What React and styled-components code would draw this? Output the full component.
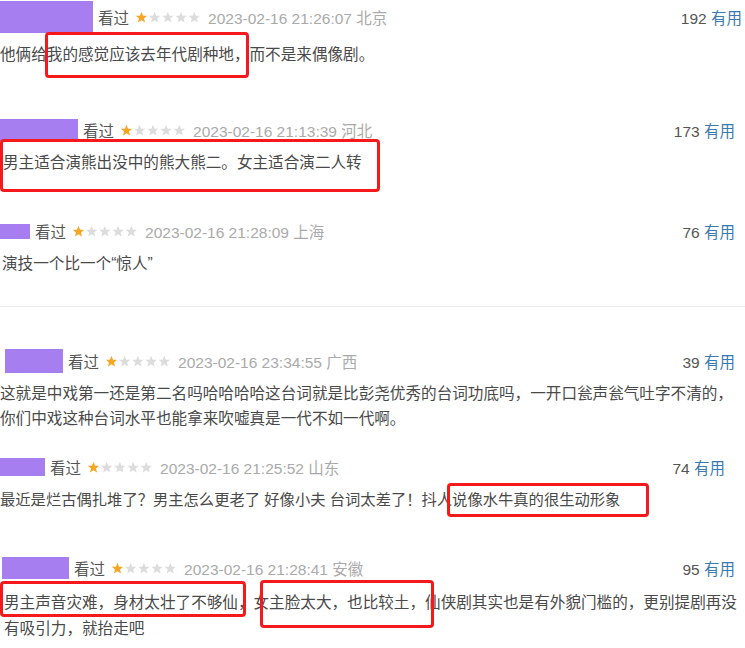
import React from 'react';
import styled, { createGlobalStyle } from 'styled-components';

const GlobalStyle = createGlobalStyle`
    body {
        margin: 0;
        background: #fff;
        font-family: "Liberation Sans", "Noto Sans CJK SC", sans-serif;
    }
`;

// top = space above the block, gap = space between header and text
const comments = [
    {
        id: 1, top: 3, gap: 10.5, padL: 0, padR: 3, textL: 0, lineH: 25,
        name: { w: 93, h: 32 },
        time: '2023-02-16 21:26:07', place: '北京', votes: 192,
        text: '他俩给我的感觉应该去年代剧种地，而不是来偶像剧。',
        marks: [{ left: 45, top: -9.5, width: 204, height: 46 }],
    },
    {
        id: 2, top: 49.5, gap: 5.5, padL: 0, padR: 10, textL: 3, lineH: 25,
        name: { w: 78, h: 22 },
        time: '2023-02-16 21:13:39', place: '河北', votes: 173,
        text: '男主适合演熊出没中的熊大熊二。女主适合演二人转',
        marks: [{ left: 0, top: -10.5, width: 380, height: 53 }],
    },
    {
        id: 3, top: 42.5, gap: 5.5, padL: 0, padR: 10, textL: 2, lineH: 25,
        name: { w: 30, h: 15 },
        time: '2023-02-16 21:28:09', place: '上海', votes: 76,
        text: '演技一个比一个“惊人”',
        marks: [],
        divider: true,
    },
    {
        id: 4, top: 40, gap: 5.5, padL: 5, padR: 10, textL: 0, lineH: 25,
        name: { w: 58, h: 24 },
        time: '2023-02-16 23:34:55', place: '广西', votes: 39,
        text: '这就是中戏第一还是第二名吗哈哈哈哈这台词就是比彭尧优秀的台词功底吗，一开口瓮声瓮气吐字不清的，你们中戏这种台词水平也能拿来吹嘘真是一代不如一代啊。',
        marks: [],
        textW: 738,
    },
    {
        id: 5, top: 22.5, gap: 5.5, padL: 0, padR: 20, textL: 0, lineH: 25, size: 15.3,
        name: { w: 45, h: 18 },
        time: '2023-02-16 21:25:52', place: '山东', votes: 74,
        text: '最近是烂古偶扎堆了？男主怎么更老了 好像小夫 台词太差了！抖人说像水牛真的很生动形象',
        marks: [{ left: 447, top: -3.5, width: 202, height: 34 }],
    },
    {
        id: 6, top: 42.5, gap: 7.5, padL: 2, padR: 10, textL: 4, lineH: 26,
        name: { w: 67, h: 22 },
        time: '2023-02-16 21:28:41', place: '安徽', votes: 95,
        text: '男主声音灾难，身材太壮了不够仙，女主脸太大，也比较土，仙侠剧其实也是有外貌门槛的，更别提剧再没有吸引力，就抬走吧',
        marks: [
            { left: 0, top: -8.5, width: 246, height: 36 },
            { left: 260, top: -9.5, width: 174, height: 48 },
        ],
        textW: 742,
    },
];

function Stars({ rating }) {
    const pts = '12,1.5 14.9,8.6 22.5,9 16.6,13.9 18.6,21.4 12,17.2 5.4,21.4 7.4,13.9 1.5,9 9.1,8.6';
    return (
        <StarRow width="66" height="13" viewBox="0 0 66 13">
            {[0, 1, 2, 3, 4].map(i => (
                <g key={i} transform={`translate(${i * 13.2} 0) scale(0.54)`}>
                    <polygon points={pts} fill={i < rating ? '#f5a623' : '#dcdcdc'} />
                </g>
            ))}
        </StarRow>
    );
}

export default class App extends React.Component {
    render() {
        return (
            <Page>
                <GlobalStyle />
                {comments.map(c => (
                    <React.Fragment key={c.id}>
                        <Comment top={c.top} padR={c.padR}>
                            <Header padL={c.padL}>
                                <Redacted w={c.name.w} h={c.name.h} />
                                <Watched>看过</Watched>
                                <Stars rating={1} />
                                <Time>{c.time} {c.place}</Time>
                                <Votes>
                                    <Count>{c.votes}</Count> <Useful>有用</Useful>
                                </Votes>
                            </Header>
                            <Body
                                gap={c.gap}
                                textL={c.textL}
                                lineH={c.lineH}
                                textW={c.textW}
                                size={c.size || 15.6}
                            >
                                {c.text}
                                {c.marks.map((m, i) => (
                                    <Mark
                                        key={i}
                                        style={{ left: m.left, top: m.top, width: m.width, height: m.height }}
                                    />
                                ))}
                            </Body>
                        </Comment>
                        {c.divider && <Divider />}
                    </React.Fragment>
                ))}
            </Page>
        );
    }
}

const Page = styled.div`
    width: 745px;
    height: 648px;
    overflow: hidden;
    background: #fff;
`;

const Comment = styled.div`
    margin-top: ${p => p.top}px;
    padding-right: ${p => p.padR}px;
`;

const Header = styled.div`
    display: flex;
    align-items: center;
    height: 28px;
    padding-left: ${p => p.padL}px;
    font-size: 15.5px;
    white-space: nowrap;
`;

const Redacted = styled.span`
    flex: none;
    width: ${p => p.w}px;
    height: ${p => p.h}px;
    background: #a67ef0;
    margin-right: 5px;
`;

const Watched = styled.span`
    color: #555;
    margin-right: 6px;
`;

const StarRow = styled.svg`
    flex: none;
    margin-right: 7px;
`;

const Time = styled.span`
    color: #aaa;
`;

const Votes = styled.span`
    margin-left: auto;
`;

const Count = styled.span`
    color: #555;
`;

const Useful = styled.span`
    color: #3a7ab0;
`;

const Body = styled.div`
    position: relative;
    box-sizing: border-box;
    margin-top: ${p => p.gap}px;
    padding-left: ${p => p.textL}px;
    width: ${p => (p.textW ? `${p.textW}px` : 'auto')};
    font-size: ${p => p.size}px;
    line-height: ${p => p.lineH}px;
    color: #494949;
`;

const Mark = styled.span`
    position: absolute;
    box-sizing: border-box;
    border: 3.5px solid #f5191c;
    border-radius: 4px;
`;

const Divider = styled.div`
    height: 1px;
    background: #ebebeb;
    margin-top: 30.5px;
`;
